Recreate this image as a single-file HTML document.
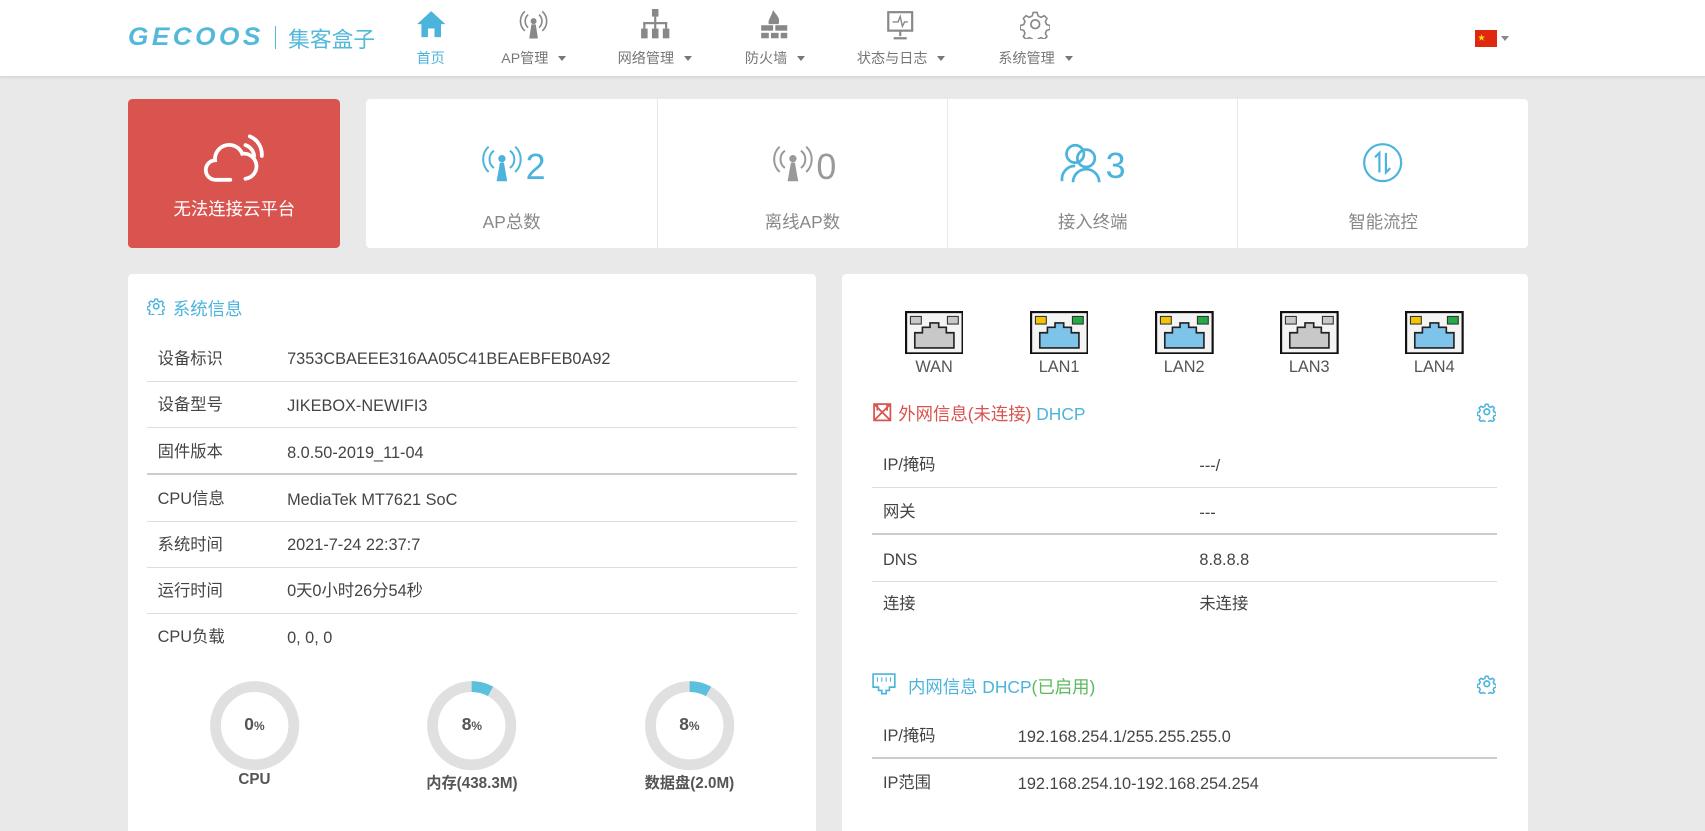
<!DOCTYPE html>
<html><head><meta charset="utf-8">
<style>
*{margin:0;padding:0;box-sizing:border-box}
html,body{width:1705px;height:831px;overflow:hidden;background:#e9e9e9}
body{font-family:"Liberation Sans","Noto Sans CJK SC",sans-serif;}
#w{zoom:1.0874;width:1568px;height:765px;position:relative;}
.a{position:absolute}
.hdr{left:0;top:0;width:1568px;height:71px;background:#fff;border-bottom:1px solid #d8d8d8;box-shadow:0 1px 2px rgba(0,0,0,.08)}
.nav{position:absolute;top:44px;font-size:13px;color:#777;white-space:nowrap}
.caret{display:inline-block;margin-left:9px;border-left:4px solid transparent;border-right:4px solid transparent;border-top:5px solid #777;vertical-align:2px}
.card{background:#fff;border-radius:4px}
.stat{position:absolute;top:0;width:267px;height:137px;text-align:center}
.stat .n{position:absolute;top:40px;left:0;width:100%;font-size:33px;}
.stat .l{position:absolute;top:101px;left:0;width:100%;font-size:16px;color:#888}
.row,.rr{position:absolute;height:43px;border-bottom:1px solid #ddd;font-size:15px;color:#444}
.row{left:135px;width:598px}
.rr{width:575px;left:802px}
.row span,.rr span{position:absolute;top:-1px;height:42px;display:flex;align-items:center}
.row span.l,.rr span.l{top:2px}
.plab{position:absolute;top:329px;width:60px;text-align:center;font-size:15px;color:#555}
.dl{position:absolute;top:709px;width:140px;text-align:center;font-size:14px;font-weight:bold;color:#555}
.dn{position:absolute;top:657px;width:40px;text-align:center;font-size:16px;font-weight:bold;color:#555}
.dn small{font-size:11px}
</style></head><body><div id="w">
<div class="a hdr"></div>
<div class="a" style="left:118px;top:21px;font-size:23px;font-weight:bold;font-style:italic;color:#52b9db;letter-spacing:3px;transform:scaleX(1.05);transform-origin:left">GECOOS</div>
<div class="a" style="left:253px;top:24px;width:1px;height:21px;background:#52b9db"></div>
<div class="a" style="left:265px;top:21px;font-size:20px;color:#52b9db">集客盒子</div>
<svg class="a" style="left:383px;top:9px" width="28" height="26" viewBox="0 0 28 26"><path d="M14 1 L27 13 L23 13 L23 25 L17 25 L17 17 L11 17 L11 25 L5 25 L5 13 L1 13Z" fill="#4cb4dc"/></svg>
<div class="nav" style="left:383px;color:#4cb4dc">首页</div>
<svg class="a" style="left:473px;top:6px" width="36" height="30" viewBox="0 0 36 30" fill="none" stroke="#888" stroke-width="1.5"><path d="M10 4a12 12 0 0 0 0 18M26 4a12 12 0 0 1 0 18M13 7a8 8 0 0 0 0 12M23 7a8 8 0 0 1 0 12"/><circle cx="18" cy="13" r="2" fill="#888"/><path d="M16 16 L14 29 L22 29 L20 16Z" fill="#888" stroke="none"/></svg>
<div class="nav" style="left:461px">AP管理<span class="caret"></span></div>
<svg class="a" style="left:589px;top:8px" width="28" height="28" viewBox="0 0 28 28" fill="#888"><rect x="11" y="0" width="6" height="7"/><rect x="13" y="7" width="2" height="6"/><rect x="3" y="12" width="22" height="2"/><rect x="3" y="12" width="2" height="6"/><rect x="13" y="12" width="2" height="6"/><rect x="23" y="12" width="2" height="6"/><rect x="1" y="18" width="6" height="9"/><rect x="11" y="18" width="6" height="9"/><rect x="21" y="18" width="6" height="9"/></svg>
<div class="nav" style="left:568px">网络管理<span class="caret"></span></div>
<svg class="a" style="left:698px;top:9px" width="28" height="27" viewBox="0 0 28 27" fill="#888"><path d="M13 0c3 5 7 7 5 13h-9c-1-4 2-6 4-13z"/><rect x="2" y="14" width="11" height="5"/><rect x="15" y="14" width="11" height="5"/><rect x="2" y="21" width="7" height="5"/><rect x="11" y="21" width="7" height="5"/><rect x="20" y="21" width="6" height="5"/></svg>
<div class="nav" style="left:685px">防火墙<span class="caret"></span></div>
<svg class="a" style="left:814px;top:9px" width="28" height="28" viewBox="0 0 28 28" fill="none" stroke="#888" stroke-width="2"><rect x="3" y="2" width="22" height="17"/><path d="M7 11h5l2-5 2 9 2-4h3" stroke-width="1.3"/><path d="M14 19v5M8 26h12"/></svg>
<div class="nav" style="left:788px">状态与日志<span class="caret"></span></div>
<svg class="a" style="left:938px;top:8px" width="28" height="28" viewBox="0 0 28 28" fill="none" stroke="#888" stroke-width="1.6"><path d="M12 2h4l1 3.5 3 1.5 3.3-1.7 2.8 2.8-1.7 3.3 1.3 3 3.5 1v4l-3.5 1-1.3 3 1.7 3.3-2.8 2.8-3.3-1.7-3 1.3-1 3.5h-4l-1-3.5-3-1.3-3.3 1.7-2.8-2.8 1.7-3.3-1.3-3-3.5-1v-4l3.5-1 1.3-3-1.7-3.3 2.8-2.8 3.3 1.7 3-1.5z" transform="scale(.9) translate(1.5 1.5)"/><circle cx="14" cy="14" r="4"/></svg>
<div class="nav" style="left:918px">系统管理<span class="caret"></span></div>
<div class="a" style="left:1356px;top:28px;width:21px;height:15px;background:#de2910"><span style="position:absolute;left:3px;top:1px;color:#ffde00;font-size:7px">★</span></div>
<div class="a" style="left:1380px;top:33px;border-left:4px solid transparent;border-right:4px solid transparent;border-top:5px solid #888"></div>

<div class="a" style="left:118px;top:91px;width:195px;height:137px;background:#d9534f;border-radius:4px"></div>
<svg class="a" style="left:186px;top:121px" width="60" height="50" viewBox="0 0 60 50" fill="none" stroke="#fff" stroke-width="3.5" stroke-linecap="round"><path d="M26 44H13a9 9 0 0 1-1-18 13 13 0 0 1 25-6 11 11 0 0 1 3 23"/><path d="M40 12a12 12 0 0 1 8 10M44 4a18 18 0 0 1 11 18"/></svg>
<div class="a" style="left:118px;top:180px;width:195px;text-align:center;color:#fff;font-size:16px">无法连接云平台</div>

<div class="a card" style="left:337px;top:91px;width:1068px;height:137px">
 <div class="stat" style="left:0"><div class="n" style="color:#4cb4dc"><svg width="44" height="38" viewBox="0 0 36 30" fill="none" stroke="#4cb4dc" stroke-width="1.5" style="vertical-align:-4px"><path d="M8 3a13 13 0 0 0 0 19M28 3a13 13 0 0 1 0 19M12 6a8 8 0 0 0 0 13M24 6a8 8 0 0 1 0 13"/><circle cx="18" cy="12" r="2" fill="#4cb4dc"/><path d="M16.5 15 L14 29 L22 29 L19.5 15Z" fill="#4cb4dc" stroke="none"/></svg>2</div><div class="l">AP总数</div></div>
 <div class="stat" style="left:267px;border-left:1px solid #e8e8e8"><div class="n" style="color:#999"><svg width="44" height="38" viewBox="0 0 36 30" fill="none" stroke="#999" stroke-width="1.5" style="vertical-align:-4px"><path d="M8 3a13 13 0 0 0 0 19M28 3a13 13 0 0 1 0 19M12 6a8 8 0 0 0 0 13M24 6a8 8 0 0 1 0 13"/><circle cx="18" cy="12" r="2" fill="#999"/><path d="M16.5 15 L14 29 L22 29 L19.5 15Z" fill="#999" stroke="none"/></svg>0</div><div class="l">离线AP数</div></div>
 <div class="stat" style="left:534px;border-left:1px solid #e8e8e8"><div class="n" style="color:#4cb4dc"><svg width="42" height="38" viewBox="0 0 42 38" fill="none" stroke="#4cb4dc" stroke-width="2.5" style="vertical-align:-5px"><circle cx="14" cy="11" r="8"/><path d="M2 36a12 12 0 0 1 12-14"/><circle cx="24" cy="15" r="8"/><path d="M12 37a12 12 0 0 1 24 0"/></svg>3</div><div class="l">接入终端</div></div>
 <div class="stat" style="left:801px;border-left:1px solid #e8e8e8"><div class="n"><svg width="38" height="38" viewBox="0 0 38 38" fill="none" stroke="#4cb4dc" stroke-width="2" style="vertical-align:-5px"><circle cx="19" cy="19" r="17"/><path d="M16 28V10l-4 4M22 10v18l4-4"/></svg></div><div class="l">智能流控</div></div>
</div>

<div class="a card" style="left:118px;top:252px;width:632px;height:520px"></div>
<svg class="a" style="left:135px;top:273px" width="17" height="17" viewBox="0 0 28 28" fill="none" stroke="#4cb4dc" stroke-width="2.4"><path d="M12 2h4l1 3.5 3 1.5 3.3-1.7 2.8 2.8-1.7 3.3 1.3 3 3.5 1v4l-3.5 1-1.3 3 1.7 3.3-2.8 2.8-3.3-1.7-3 1.3-1 3.5h-4l-1-3.5-3-1.3-3.3 1.7-2.8-2.8 1.7-3.3-1.3-3-3.5-1v-4l3.5-1 1.3-3-1.7-3.3 2.8-2.8 3.3 1.7 3-1.5z" transform="scale(.9) translate(1.5 1.5)"/><circle cx="14" cy="14" r="4"/></svg>
<div class="a" style="left:159px;top:272px;font-size:16px;color:#4cb4dc">系统信息</div>
<div class="row" style="top:308px"><span style="left:10px">设备标识</span><span class="l" style="left:129px">7353CBAEEE316AA05C41BEAEBFEB0A92</span></div>
<div class="row" style="top:351px"><span style="left:10px">设备型号</span><span class="l" style="left:129px">JIKEBOX-NEWIFI3</span></div>
<div class="row" style="top:394px;border-bottom:2px solid #ccc"><span style="left:10px">固件版本</span><span class="l" style="left:129px">8.0.50-2019_11-04</span></div>
<div class="row" style="top:437px"><span style="left:10px">CPU信息</span><span class="l" style="left:129px">MediaTek MT7621 SoC</span></div>
<div class="row" style="top:479px"><span style="left:10px">系统时间</span><span class="l" style="left:129px">2021-7-24 22:37:7</span></div>
<div class="row" style="top:522px"><span style="left:10px">运行时间</span><span style="left:129px">0天0小时26分54秒</span></div>
<div class="row" style="top:564px;border:none"><span style="left:10px">CPU负载</span><span class="l" style="left:129px">0, 0, 0</span></div>
<svg class="a" style="left:192px;top:625px" width="84" height="84" viewBox="0 0 84 84"><circle cx="42" cy="42" r="36" fill="none" stroke="#e0e0e0" stroke-width="10"/></svg>
<svg class="a" style="left:392px;top:625px" width="84" height="84" viewBox="0 0 84 84"><circle cx="42" cy="42" r="36" fill="none" stroke="#e0e0e0" stroke-width="10"/><circle cx="42" cy="42" r="36" fill="none" stroke="#5bc0de" stroke-width="10" stroke-dasharray="18.1 300" transform="rotate(-90 42 42)"/></svg>
<svg class="a" style="left:592px;top:625px" width="84" height="84" viewBox="0 0 84 84"><circle cx="42" cy="42" r="36" fill="none" stroke="#e0e0e0" stroke-width="10"/><circle cx="42" cy="42" r="36" fill="none" stroke="#5bc0de" stroke-width="10" stroke-dasharray="18.1 300" transform="rotate(-90 42 42)"/></svg>
<div class="dn" style="left:214px">0<small>%</small></div>
<div class="dn" style="left:414px">8<small>%</small></div>
<div class="dn" style="left:614px">8<small>%</small></div>
<div class="dl" style="left:164px">CPU</div>
<div class="dl" style="left:364px">内存(438.3M)</div>
<div class="dl" style="left:564px">数据盘(2.0M)</div>

<div class="a card" style="left:774px;top:252px;width:631px;height:520px"></div>
<svg width="0" height="0" style="position:absolute"><defs>
<g id="pg"><rect x="1" y="1" width="52" height="38" fill="#f4f4f4" stroke="#111" stroke-width="2"/><path d="M9 34V20h7v-5h7v-4h8v4h7v5h7v14z" fill="#c8c8c8" stroke="#222" stroke-width="1.5"/><rect x="5" y="5" width="10" height="7" fill="#c8c8c8" stroke="#333"/><rect x="39" y="5" width="10" height="7" fill="#c8c8c8" stroke="#333"/></g>
<g id="pb"><rect x="1" y="1" width="52" height="38" fill="#f4f4f4" stroke="#111" stroke-width="2"/><path d="M9 34V20h7v-5h7v-4h8v4h7v5h7v14z" fill="#7ec3ea" stroke="#222" stroke-width="1.5"/><rect x="5" y="5" width="10" height="7" fill="#f5c400" stroke="#333"/><rect x="39" y="5" width="10" height="7" fill="#22aa44" stroke="#333"/></g>
</defs></svg>
<svg class="a" style="left:832px;top:286px" width="54" height="40"><use href="#pg"/></svg>
<svg class="a" style="left:947px;top:286px" width="54" height="40"><use href="#pb"/></svg>
<svg class="a" style="left:1062px;top:286px" width="54" height="40"><use href="#pb"/></svg>
<svg class="a" style="left:1177px;top:286px" width="54" height="40"><use href="#pg"/></svg>
<svg class="a" style="left:1292px;top:286px" width="54" height="40"><use href="#pb"/></svg>
<div class="plab" style="left:829px">WAN</div><div class="plab" style="left:944px">LAN1</div><div class="plab" style="left:1059px">LAN2</div><div class="plab" style="left:1174px">LAN3</div><div class="plab" style="left:1289px">LAN4</div>
<svg class="a" style="left:803px;top:371px" width="17" height="17" viewBox="0 0 17 17" fill="none" stroke="#d9534f" stroke-width="1.6"><rect x="1" y="1" width="15" height="15"/><path d="M1 1l15 15M16 1L1 16M4 1v6M13 1v6"/></svg>
<div class="a" style="left:826px;top:369px;font-size:16px;color:#d9534f">外网信息(未连接) <span style="color:#4cb4dc">DHCP</span></div>
<svg class="a" style="left:1358px;top:370px" width="18" height="18" viewBox="0 0 28 28" fill="none" stroke="#4cb4dc" stroke-width="2.4"><path d="M12 2h4l1 3.5 3 1.5 3.3-1.7 2.8 2.8-1.7 3.3 1.3 3 3.5 1v4l-3.5 1-1.3 3 1.7 3.3-2.8 2.8-3.3-1.7-3 1.3-1 3.5h-4l-1-3.5-3-1.3-3.3 1.7-2.8-2.8 1.7-3.3-1.3-3-3.5-1v-4l3.5-1 1.3-3-1.7-3.3 2.8-2.8 3.3 1.7 3-1.5z" transform="scale(.9) translate(1.5 1.5)"/><circle cx="14" cy="14" r="4"/></svg>
<div class="rr" style="top:406px"><span style="left:10px">IP/掩码</span><span class="l" style="left:301px">---/</span></div>
<div class="rr" style="top:449px;border-bottom:2px solid #ccc"><span style="left:10px">网关</span><span class="l" style="left:301px">---</span></div>
<div class="rr" style="top:492px"><span class="l" style="left:10px">DNS</span><span class="l" style="left:301px">8.8.8.8</span></div>
<div class="rr" style="top:534px;border:none"><span style="left:10px">连接</span><span style="left:301px">未连接</span></div>
<svg class="a" style="left:802px;top:619px" width="22" height="20" viewBox="0 0 22 20" fill="none" stroke="#4cb4dc" stroke-width="1.5"><path d="M1 1h20v12h-5v3h-3v3H9v-3H6v-3H1z"/><path d="M5 4v4M9 4v4M13 4v4M17 4v4" stroke-width="1"/></svg>
<div class="a" style="left:835px;top:620px;font-size:16px;color:#4cb4dc">内网信息 DHCP<span style="color:#5cb85c">(已启用)</span></div>
<svg class="a" style="left:1358px;top:620px" width="18" height="18" viewBox="0 0 28 28" fill="none" stroke="#4cb4dc" stroke-width="2.4"><path d="M12 2h4l1 3.5 3 1.5 3.3-1.7 2.8 2.8-1.7 3.3 1.3 3 3.5 1v4l-3.5 1-1.3 3 1.7 3.3-2.8 2.8-3.3-1.7-3 1.3-1 3.5h-4l-1-3.5-3-1.3-3.3 1.7-2.8-2.8 1.7-3.3-1.3-3-3.5-1v-4l3.5-1 1.3-3-1.7-3.3 2.8-2.8 3.3 1.7 3-1.5z" transform="scale(.9) translate(1.5 1.5)"/><circle cx="14" cy="14" r="4"/></svg>
<div class="rr" style="top:655px;border-bottom:2px solid #ccc"><span style="left:10px">IP/掩码</span><span class="l" style="left:134px">192.168.254.1/255.255.255.0</span></div>
<div class="rr" style="top:698px;border:none"><span style="left:10px">IP范围</span><span class="l" style="left:134px">192.168.254.10-192.168.254.254</span></div>
</div></body></html>
